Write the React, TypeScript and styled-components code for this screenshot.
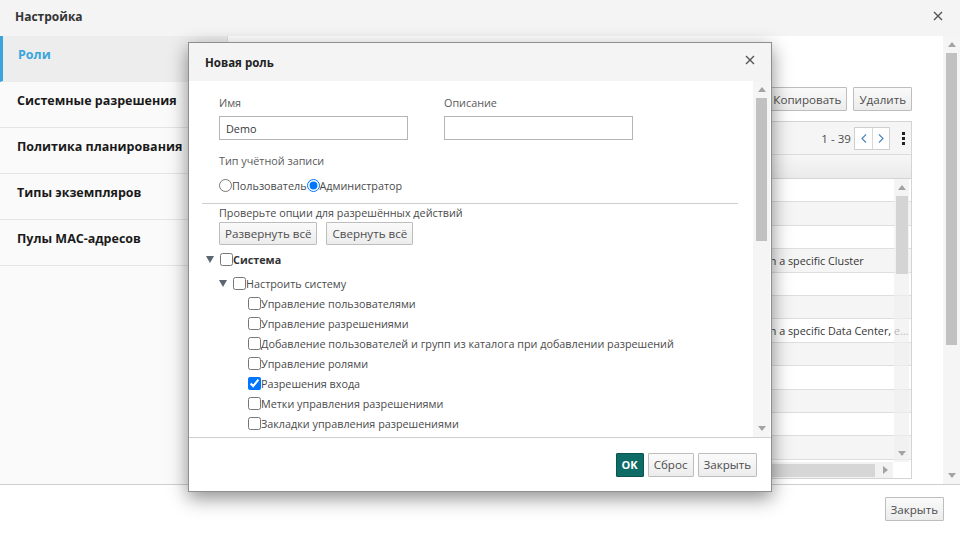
import styled, { createGlobalStyle } from 'styled-components';

type Perm = { label: string; checked?: boolean };
type Role = { name: string; type: string; desc: string };

const navItems = [
  'Роли',
  'Системные разрешения',
  'Политика планирования',
  'Типы экземпляров',
  'Пулы MAC-адресов',
];

const leaves: Perm[] = [
  { label: 'Управление пользователями' },
  { label: 'Управление разрешениями' },
  { label: 'Добавление пользователей и групп из каталога при добавлении разрешений' },
  { label: 'Управление ролями' },
  { label: 'Разрешения входа', checked: true },
  { label: 'Метки управления разрешениями' },
  { label: 'Закладки управления разрешениями' },
  { label: 'Управление журналом событий' },
  { label: 'Управление квотами' },
];

const roles: Role[] = [
  { name: 'ClusterAdmin', type: 'Администратор', desc: '' },
  { name: 'DataCenterAdmin', type: 'Администратор', desc: '' },
  { name: 'DiskCreator', type: 'Пользователь', desc: '' },
  { name: 'HostAdmin', type: 'Администратор', desc: 'in a specific Cluster' },
  { name: 'InstanceCreator', type: 'Пользователь', desc: '' },
  { name: 'NetworkAdmin', type: 'Администратор', desc: '' },
  { name: 'NetworkUser', type: 'Пользователь', desc: 'in a specific Data Center, each sub-object inherits' },
  { name: 'QuotaConsumer', type: 'Пользователь', desc: '' },
  { name: 'SuperUser', type: 'Администратор', desc: '' },
  { name: 'TagManager', type: 'Администратор', desc: '' },
  { name: 'TemplateAdmin', type: 'Администратор', desc: '' },
  { name: 'UserRole', type: 'Пользователь', desc: '' },
  { name: 'VmCreator', type: 'Пользователь', desc: '' },
];

const GlobalStyle = createGlobalStyle`
  html, body {
    margin: 0;
    padding: 0;
  }
  body {
    font-family: 'Open Sans', 'Liberation Sans', sans-serif;
    font-size: 10.8px;
    color: #363636;
    background: #fff;
  }
  * {
    box-sizing: border-box;
  }
`;

function CloseIcon({ size = 10 }: { size?: number }) {
  return (
    <svg width={size} height={size} viewBox="0 0 10 10">
      <path d="M1 1L9 9M9 1L1 9" stroke="#555" strokeWidth="1.4" />
    </svg>
  );
}

function Caret({ dir }: { dir: 'up' | 'down' | 'right' }) {
  const pts = dir === 'up' ? '0,5 4,0 8,5' : dir === 'down' ? '0,0 8,0 4,5' : '0,0 5,4 0,8';
  const w = dir === 'right' ? 5 : 8;
  const h = dir === 'right' ? 8 : 5;
  return (
    <svg width={w} height={h} viewBox={`0 0 ${w} ${h}`}>
      <polygon points={pts} fill="#a3a3a3" />
    </svg>
  );
}

function Toggle() {
  return (
    <svg width="8" height="7" viewBox="0 0 8 7">
      <polygon points="0,0 8,0 4,7" fill="#5b6670" />
    </svg>
  );
}

function VScrollbar({ thumbHeight, light }: { thumbHeight: number; light?: boolean }) {
  return (
    <ScrollTrack $light={light}>
      <ScrollArrow>
        <Caret dir="up" />
      </ScrollArrow>
      <ScrollThumb $h={thumbHeight} $light={light} />
      <ScrollFill />
      <ScrollArrow>
        <Caret dir="down" />
      </ScrollArrow>
    </ScrollTrack>
  );
}

export default function App() {
  return (
    <>
      <GlobalStyle />
      <Page>
        <Header>
          <HeaderTitle>Настройка</HeaderTitle>
          <CloseIcon />
        </Header>

        <Body>
          <Nav>
            {navItems.map((item, idx) => (
              <NavItem key={item} $active={idx === 0}>
                {item}
              </NavItem>
            ))}
          </Nav>

          <Content>
            <Main>
              <Toolbar>
                <Button>Новая</Button>
                <Button>Изменить</Button>
                <Button>Копировать</Button>
                <Button>Удалить</Button>
              </Toolbar>

              <Panel>
                <PanelToolbar>
                  <PagerText>1 - 39</PagerText>
                  <Pager>
                    <PagerBtn>
                      <svg width="6" height="9" viewBox="0 0 6 9">
                        <polyline points="5,0.5 1,4.5 5,8.5" fill="none" stroke="#4f87c0" strokeWidth="1.2" />
                      </svg>
                    </PagerBtn>
                    <PagerBtn>
                      <svg width="6" height="9" viewBox="0 0 6 9">
                        <polyline points="1,0.5 5,4.5 1,8.5" fill="none" stroke="#4f87c0" strokeWidth="1.2" />
                      </svg>
                    </PagerBtn>
                  </Pager>
                  <Kebab>
                    <i />
                    <i />
                    <i />
                  </Kebab>
                </PanelToolbar>

                <HeadRow>
                  <Cell>Имя</Cell>
                  <Cell>Тип учётной записи</Cell>
                  <Cell>Описание</Cell>
                </HeadRow>

                <RowsArea>
                  {roles.map((r, idx) => (
                    <Row key={r.name} $odd={idx % 2 === 1}>
                      <Cell>{r.name}</Cell>
                      <Cell>{r.type}</Cell>
                      <Cell>{r.desc}</Cell>
                    </Row>
                  ))}
                  <InnerScroll>
                    <VScrollbar thumbHeight={78} light />
                  </InnerScroll>
                </RowsArea>

                <HScroll>
                  <HTrack>
                    <HThumb />
                    <Caret dir="right" />
                  </HTrack>
                  <HCorner />
                </HScroll>
              </Panel>
            </Main>
            <VScrollbar thumbHeight={292} />
          </Content>
        </Body>

        <Footer>
          <Button>Закрыть</Button>
        </Footer>

        <Modal>
          <ModalHeader>
            <ModalTitle>Новая роль</ModalTitle>
            <ModalClose>
              <CloseIcon />
            </ModalClose>
          </ModalHeader>

          <ModalBody>
            <ModalScroll>
              <Fields>
                <Field>
                  <Label>Имя</Label>
                  <TextInput defaultValue="Demo" />
                </Field>
                <Field>
                  <Label>Описание</Label>
                  <TextInput defaultValue="" />
                </Field>
              </Fields>

              <Label $top={13}>Тип учётной записи</Label>
              <RadioRow>
                <RadioLabel>
                  <Radio type="radio" name="acc" />
                  Пользователь
                </RadioLabel>
                <RadioLabel>
                  <Radio type="radio" name="acc" defaultChecked />
                  Администратор
                </RadioLabel>
              </RadioRow>

              <Divider />

              <Hint>Проверьте опции для разрешённых действий</Hint>
              <ExpandRow>
                <Button $tall>Развернуть всё</Button>
                <Button $tall>Свернуть всё</Button>
              </ExpandRow>

              <Tree>
                <TreeRow $level={0}>
                  <ToggleBox>
                    <Toggle />
                  </ToggleBox>
                  <Check type="checkbox" />
                  <NodeText $bold>Система</NodeText>
                </TreeRow>
                <TreeRow $level={1} $gap={4}>
                  <ToggleBox>
                    <Toggle />
                  </ToggleBox>
                  <Check type="checkbox" />
                  <NodeText>Настроить систему</NodeText>
                </TreeRow>
                {leaves.map(p => (
                  <TreeRow key={p.label} $level={2}>
                    <ToggleBox />
                    <Check type="checkbox" defaultChecked={p.checked} />
                    <NodeText>{p.label}</NodeText>
                  </TreeRow>
                ))}
              </Tree>
            </ModalScroll>
            <VScrollbar thumbHeight={143} />
          </ModalBody>

          <ModalFooter>
            <Button $primary>OK</Button>
            <Button>Сброс</Button>
            <Button>Закрыть</Button>
          </ModalFooter>
        </Modal>
      </Page>
    </>
  );
}

const Page = styled.div`
  position: relative;
  width: 960px;
  height: 535px;
  display: flex;
  flex-direction: column;
  overflow: hidden;
`;

const Header = styled.div`
  height: 36px;
  flex: none;
  display: flex;
  align-items: center;
  justify-content: space-between;
  padding: 0 17px 4px 15px;
  background: #f4f4f4;
`;

const HeaderTitle = styled.div`
  font-size: 12px;
  font-weight: 700;
  color: #333;
`;

const Body = styled.div`
  height: 449px;
  flex: none;
  display: flex;
  border-bottom: 1px solid #cfcfcf;
`;

const Nav = styled.div`
  width: 228px;
  flex: none;
  background: #fafafa;
  border-right: 1px solid #e2e2e2;
`;

const NavItem = styled.div<{ $active?: boolean }>`
  padding: 11px 10px 18px ${p => (p.$active ? '15px' : '17px')};
  line-height: 16px;
  font-size: 12.5px;
  font-weight: 700;
  white-space: nowrap;
  color: ${p => (p.$active ? '#39a5dc' : '#1a1a1a')};
  background: ${p => (p.$active ? '#ededed' : 'transparent')};
  border-left: ${p => (p.$active ? '3px solid #39a5dc' : 'none')};
  border-bottom: 1px solid ${p => (p.$active ? '#ededed' : '#e4e4e4')};
`;

const Content = styled.div`
  flex: 1;
  display: flex;
  background: #fff;
`;

const Main = styled.div`
  flex: 1;
  display: flex;
  flex-direction: column;
  padding: 51px 31px 5px 20px;
`;

const Toolbar = styled.div`
  display: flex;
  justify-content: flex-end;
  gap: 6px;
  margin-bottom: 10px;
`;

const Button = styled.button<{ $primary?: boolean; $tall?: boolean }>`
  height: ${p => (p.$tall ? '23px' : '24px')};
  padding: 0 5px;
  font-family: inherit;
  font-size: ${p => (p.$primary ? '11px' : '11.6px')};
  font-weight: ${p => (p.$primary ? 700 : 400)};
  color: ${p => (p.$primary ? '#fff' : '#4d4d4d')};
  background: ${p => (p.$primary ? '#0e6b65' : 'linear-gradient(#fafafa, #ececec)')};
  border: 1px solid ${p => (p.$primary ? '#0a5550' : '#bdbdbd')};
  border-radius: 1px;
  white-space: nowrap;
`;

const Panel = styled.div`
  flex: 1;
  display: flex;
  flex-direction: column;
  border: 1px solid #d4d4d4;
  min-height: 0;
`;

const PanelToolbar = styled.div`
  height: 33px;
  flex: none;
  display: flex;
  align-items: center;
  justify-content: flex-end;
  padding-right: 4px;
  background: #f5f5f5;
  border-bottom: 1px solid #dcdcdc;
`;

const PagerText = styled.span`
  font-size: 11.6px;
  color: #4d4d4d;
  margin-right: 3px;
`;

const Pager = styled.div`
  display: flex;
  height: 23px;
  border: 1px solid #cfcfcf;
  background: #fff;
  margin-right: 9px;
`;

const PagerBtn = styled.div`
  width: 17px;
  display: flex;
  align-items: center;
  justify-content: center;

  & + & {
    border-left: 1px solid #d8d8d8;
  }
`;

const Kebab = styled.div`
  width: 8px;
  display: flex;
  flex-direction: column;
  align-items: center;
  gap: 2px;

  i {
    width: 3px;
    height: 3px;
    background: #222;
  }
`;

const HeadRow = styled.div`
  height: 24px;
  flex: none;
  display: grid;
  grid-template-columns: 200px 250px 1fr;
  align-items: center;
  font-weight: 700;
  background: linear-gradient(#f6f6f6, #ebebeb);
  border-bottom: 1px solid #d4d4d4;
`;

const Cell = styled.div`
  padding: 0 1px 0 8px;
  white-space: nowrap;
  overflow: hidden;
  text-overflow: ellipsis;
`;

const RowsArea = styled.div`
  position: relative;
  flex: 1;
  overflow: hidden;
`;

const Row = styled.div<{ $odd?: boolean }>`
  height: 23.4px;
  display: grid;
  grid-template-columns: 200px 310px 1fr;
  align-items: center;
  color: #363636;
  background: ${p => (p.$odd ? '#f5f5f5' : '#fff')};
  border-bottom: 1px solid #dedede;
`;

const InnerScroll = styled.div`
  position: absolute;
  top: 0;
  right: 2px;
  bottom: 0;
  width: 15px;
  display: flex;
`;

const HScroll = styled.div`
  height: 16px;
  flex: none;
  display: flex;
`;

const HTrack = styled.div`
  flex: 1;
  display: flex;
  align-items: center;
  gap: 8px;
  padding-right: 5px;
  background: #f2f2f2;
`;

const HThumb = styled.div`
  flex: 1;
  height: 13px;
  background: #d6d6d6;
`;

const HCorner = styled.div`
  width: 18px;
  background: #fff;
`;

const ScrollTrack = styled.div<{ $light?: boolean }>`
  width: ${p => (p.$light ? '15px' : '17px')};
  flex: none;
  display: flex;
  flex-direction: column;
  align-items: center;
  background: ${p => (p.$light ? 'rgba(240, 240, 240, 0.7)' : '#f5f5f5')};
`;

const ScrollArrow = styled.div`
  height: 17px;
  width: 100%;
  display: flex;
  align-items: center;
  justify-content: center;
`;

const ScrollThumb = styled.div<{ $h: number; $light?: boolean }>`
  width: ${p => (p.$light ? '12px' : '11px')};
  height: ${p => p.$h}px;
  background: ${p => (p.$light ? '#d4d4d4' : '#c1c1c1')};
`;

const ScrollFill = styled.div`
  flex: 1;
`;

const Footer = styled.div`
  flex: 1;
  display: flex;
  justify-content: flex-end;
  align-items: flex-start;
  padding: 12px 16px 0 0;
`;

const Modal = styled.div`
  position: absolute;
  left: 188px;
  top: 42px;
  width: 584px;
  height: 450px;
  display: flex;
  flex-direction: column;
  background: #fff;
  border: 1px solid #8f8f8f;
  box-shadow: 0 6px 18px rgba(0, 0, 0, 0.45);
`;

const ModalHeader = styled.div`
  height: 38px;
  flex: none;
  display: flex;
  align-items: center;
  justify-content: space-between;
  padding: 0 16px 0 16px;
  background: #f4f4f4;
`;

const ModalTitle = styled.div`
  font-size: 11.5px;
  font-weight: 700;
  color: #222;
`;

const ModalClose = styled.span`
  display: flex;
  margin-top: -5px;
`;

const ModalBody = styled.div`
  height: 356px;
  flex: none;
  display: flex;
  padding-right: 1px;
`;

const ModalScroll = styled.div`
  flex: 1;
  overflow: hidden;
  padding: 14px 15px 0 13px;
`;

const Fields = styled.div`
  display: grid;
  grid-template-columns: 189px 189px;
  column-gap: 36px;
  padding-left: 17px;
`;

const Field = styled.div`
  display: flex;
  flex-direction: column;
`;

const Label = styled.div<{ $top?: number }>`
  line-height: 16px;
  color: #5a5a5a;
  margin: ${p => p.$top ?? 0}px 0 5px 0;
  padding-left: ${p => (p.$top ? '17px' : '0')};
`;

const TextInput = styled.input`
  height: 24px;
  padding: 0 6px;
  font-family: inherit;
  font-size: 10.8px;
  color: #363636;
  border: 1px solid #b5b5b5;
  border-radius: 0;
  outline: none;
`;

const RadioRow = styled.div`
  display: flex;
  padding-left: 17px;
  margin-top: 8px;
  height: 16px;
  align-items: center;
`;

const RadioLabel = styled.label`
  display: flex;
  align-items: center;
  color: #4a4a4a;
`;

const Radio = styled.input`
  width: 13px;
  height: 13px;
  margin: 0;
`;

const Divider = styled.div`
  height: 1px;
  margin-top: 10px;
  background: #cfcfcf;
`;

const Hint = styled.div`
  margin-top: 1px;
  padding-left: 17px;
  line-height: 16px;
  color: #4a4a4a;
`;

const ExpandRow = styled.div`
  display: flex;
  gap: 9px;
  margin-top: 1px;
  padding-left: 17px;
`;

const Tree = styled.div`
  margin-top: 4px;
  padding-left: 4px;
`;

const TreeRow = styled.div<{ $level: number; $gap?: number }>`
  height: 20px;
  display: flex;
  align-items: center;
  padding-left: ${p => [0, 13, 28][p.$level]}px;
  margin-top: ${p => p.$gap ?? 0}px;
`;

const ToggleBox = styled.div`
  width: 14px;
  flex: none;
  display: flex;
  align-items: center;
`;

const Check = styled.input`
  width: 13px;
  height: 13px;
  margin: 0;
  flex: none;
`;

const NodeText = styled.span<{ $bold?: boolean }>`
  white-space: nowrap;
  font-weight: ${p => (p.$bold ? 700 : 400)};
  color: ${p => (p.$bold ? '#333' : '#4a4a4a')};
`;

const ModalFooter = styled.div`
  flex: 1;
  display: flex;
  justify-content: flex-end;
  align-items: center;
  gap: 4px;
  padding-right: 14px;
  border-top: 1px solid #cfcfcf;
`;
